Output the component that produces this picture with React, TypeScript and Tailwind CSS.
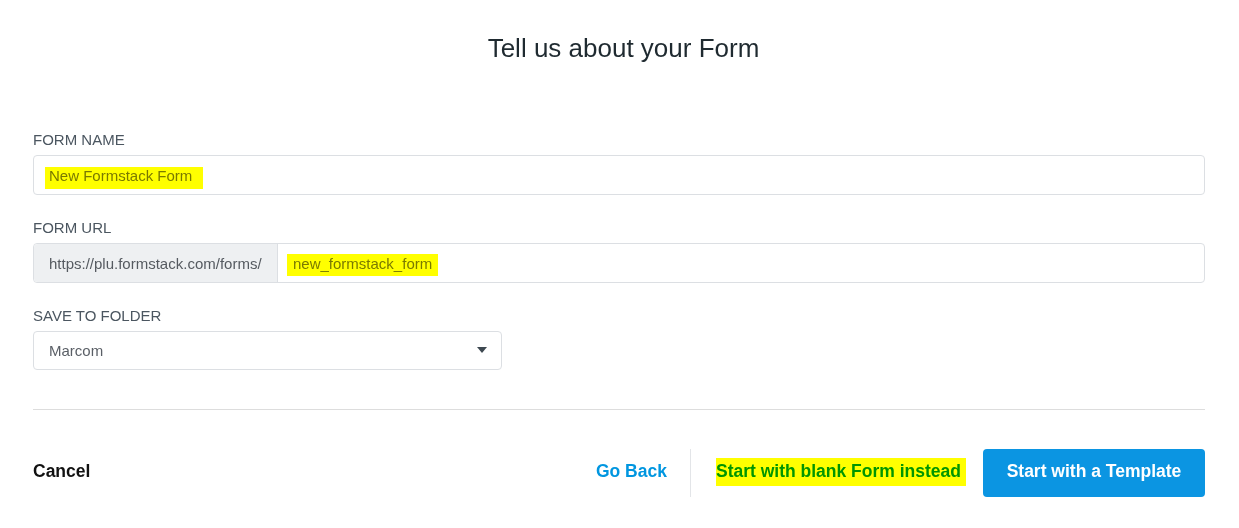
import type { ReactNode } from "react";

// marker-style highlight laid over text (multiply, like a real highlighter)
const Marker = ({ children, className }: { children: ReactNode; className: string }) => {
  return (
    <span className="relative inline-block">
      {children}
      <span className={`pointer-events-none absolute bg-[#ffff00] mix-blend-multiply ${className}`} />
    </span>
  );
};

const Label = ({ text }: { text: string }) => {
  return <div className="h-5 text-[15px] leading-5 text-[#4b5660] mb-[5px]">{text}</div>;
};

const App = () => {
  return (
    <div
      className="w-[1239px] h-[528px] bg-white pl-[33px] pr-[34px] pt-8 text-[#555a60]"
      style={{ fontFamily: '"Liberation Sans", Arial, sans-serif' }}
    >
      {/* 제목 */}
      <h1 className="h-8 pl-[9px] text-center text-[26px] leading-8 text-[#1f2a30]">Tell us about your Form</h1>

      {/* 입력 필드 */}
      <div className="mt-[66px] flex flex-col gap-[23px]">
        <div>
          <Label text="FORM NAME" />
          <div className="h-10 flex items-center border border-[#dcdfe3] rounded-[4px] px-[15px] pt-px text-[15px] leading-[18px]">
            <Marker className="-left-[4px] -right-[11px] top-0 -bottom-[4px]">
              <span className="text-[#7a7a7a]">New Formstack Form</span>
            </Marker>
          </div>
        </div>

        <div>
          <Label text="FORM URL" />
          <div className="h-10 flex border border-[#dcdfe3] rounded-[4px] text-[15px] leading-[18px]">
            <div className="w-[244px] flex items-center bg-[#eef0f2] border-r border-[#dcdfe3] rounded-l-[4px] pl-[15px] pt-px text-[#555a60]">
              https://plu.formstack.com/forms/
            </div>
            <div className="flex-1 flex items-center pl-[15px] pt-px">
              <Marker className="-left-[6px] -right-[6px] -top-[1px] -bottom-[3px]">
                <span className="text-[#7a7a7a]">new_formstack_form</span>
              </Marker>
            </div>
          </div>
        </div>

        <div>
          <Label text="SAVE TO FOLDER" />
          <div className="w-[469px] h-[39px] flex items-center justify-between border border-[#dcdfe3] rounded-[4px] pl-[15px] pr-[14px] text-[15px] leading-[18px] text-[#5a5f66]">
            <span className="pt-px">Marcom</span>
            <svg width="10" height="6" viewBox="0 0 10 6" className="-mt-[2px]">
              <path d="M0 0h10L5 6z" fill="#3d4850" />
            </svg>
          </div>
        </div>
      </div>

      <hr className="mt-[39px] border-0 border-t border-[#dddddd]" />

      {/* 하단 버튼 */}
      <div className="mt-[39px] h-12 flex items-center justify-between text-[17.5px] leading-5 font-bold">
        <button className="mb-1 text-[#111111]">Cancel</button>
        <div className="flex items-center h-12">
          <button className="mb-1 text-[#0096e0]">Go Back</button>
          <div className="w-px h-12 bg-[#e3e5e8] ml-[23px] mr-[25px]" />
          <span className="mb-1">
            <Marker className="left-0 -right-[5px] -top-[3px] -bottom-[5px]">
              <button className="text-[#0096e0]">Start with blank Form instead</button>
            </Marker>
          </span>
          <button className="ml-[22px] h-12 w-[222px] pb-1 rounded-[4px] bg-[#0b95e2] text-white">Start with a Template</button>
        </div>
      </div>
    </div>
  );
};

export default App;
